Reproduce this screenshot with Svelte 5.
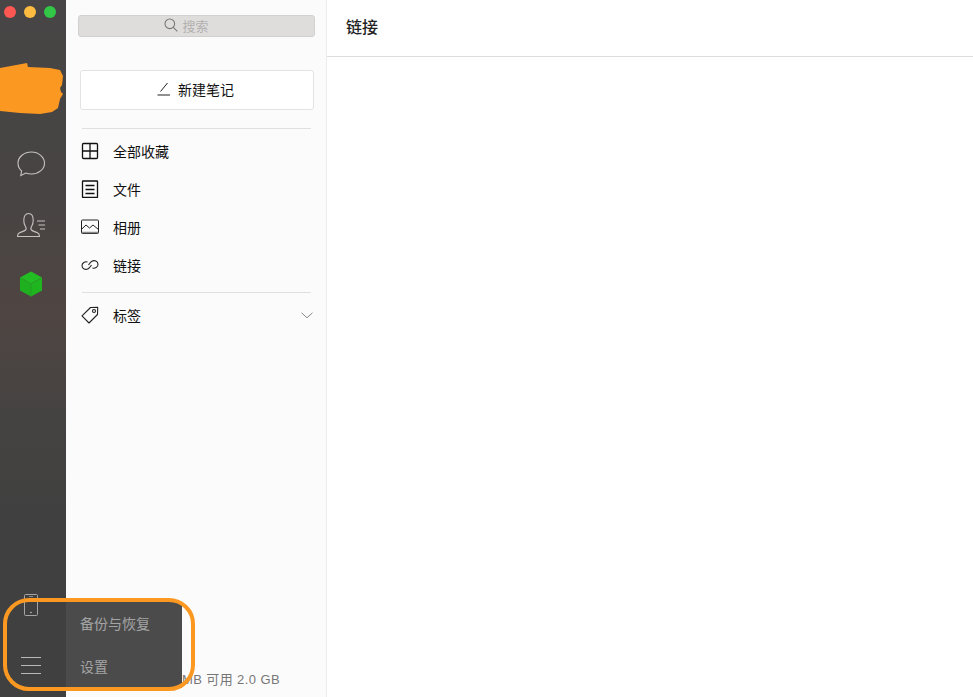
<script lang="ts">
  const navItems = [
    { id: "all", label: "全部收藏" },
    { id: "file", label: "文件" },
    { id: "album", label: "相册" },
    { id: "link", label: "链接" },
  ];
</script>

<div class="window">
  <aside class="rail">
    <div class="lights">
      <span class="light red"></span>
      <span class="light yellow"></span>
      <span class="light green"></span>
    </div>

    <nav class="rail-icons">
      <svg width="30" height="28" viewBox="0 0 30 28" fill="none" stroke="#c4c2c0" stroke-width="1.1">
        <path d="M15.500 1C8 1 2 6 2 12.300c0 3.100 1.300 5.700 3.600 7.700L4.800 24.500l5-2.500c1.800.7 3.700 1 5.700 1 7 0 13-4.800 13-10.800S22.500 1 15.500 1z" />
      </svg>
      <svg width="30" height="26" viewBox="0 0 30 26" fill="none" stroke="#c4c2c0" stroke-width="1.1">
        <path d="M1.500 24.500c0-2 .5-3 2-3.700 2.500-1.100 5-1.800 6-2.800 1-1 .7-2.500-.2-3.800-1-1.500-1.500-3.500-1.500-6 0-4.200 1.800-6.700 4.700-6.700s4.700 2.500 4.700 6.700c0 2.500-.5 4.500-1.500 6-.9 1.300-1.200 2.800-.2 3.800 1 1 3.500 1.700 6 2.800 1.500.7 2 1.700 2 3.700z" />
        <path d="M21 9h8M22.500 13h6.500M24 17h5" />
      </svg>
      <svg width="26" height="26" viewBox="0 0 26 26">
        <path d="M13 .5 24 6.500 13 12.800 2 6.500z" fill="#22bd22" />
        <path d="M2 6.500 13 12.800V25.500L2 19.500z" fill="#1fb01f" />
        <path d="M24 6.500 13 12.800V25.500L24 19.500z" fill="#1fb51f" />
        <path d="M13 12.800V25.500M2 6.500l11 6.300L24 6.500" stroke="#2a9a2a" stroke-width=".8" fill="none" />
      </svg>
    </nav>

    <div class="rail-bottom">
      <svg width="16" height="24" viewBox="0 0 16 24" fill="none" stroke="#a5a5a5" stroke-width="1">
        <rect x="1.500" y="1.500" width="13" height="21" rx="1" />
        <path d="M6 3.500h4" stroke-width=".7" />
        <circle cx="8" cy="19.500" r=".8" fill="#c4c4c4" stroke="none" />
      </svg>
      <svg width="22" height="18" viewBox="0 0 22 18" fill="none" stroke="#b8b8b8" stroke-width="1">
        <path d="M1 .5h20M1 8.500h20M1 16.500h20" />
      </svg>
    </div>
  </aside>

  <section class="sidebar">
    <div class="search">
      <svg width="14" height="14" viewBox="0 0 14 14" fill="none" stroke="#777" stroke-width="1.100">
        <circle cx="5.800" cy="5.800" r="4.800" />
        <path d="m9.300 9.300 4 4" />
      </svg>
      <span>搜索</span>
    </div>

    <button type="button" class="new-note">
      <svg width="14" height="14" viewBox="0 0 14 14" fill="none" stroke="#222" stroke-width="1">
        <path d="M3.500 9.500 10.500 1M.500 13h12.500" />
      </svg>
      <span>新建笔记</span>
    </button>

    <hr class="first" />

    <ul class="nav">
      {#each navItems as item (item.id)}
        <li>
          <span class="nav-icon">
            {#if item.id === "all"}
              <svg width="18" height="18" viewBox="0 0 18 18" fill="none" stroke="#111" stroke-width="1.300">
                <rect x="1.500" y="1.500" width="15" height="15" rx="1" />
                <path d="M9 1.500v15M1.500 9h15" />
              </svg>
            {:else if item.id === "file"}
              <svg width="18" height="18" viewBox="0 0 18 18" fill="none" stroke="#111" stroke-width="1.300">
                <rect x="1.500" y="1" width="15" height="16.500" rx=".5" />
                <path d="M4.500 5.500h9M4.500 9.500h9M4.500 13.500h9" />
              </svg>
            {:else if item.id === "album"}
              <svg width="18" height="16" viewBox="0 0 18 16" fill="none" stroke="#222" stroke-width="1">
                <rect x=".5" y="1" width="17" height="13.500" rx="1" />
                <path d="M.8 10 5 6l3.500 3L12 6l5.500 4.500" />
                <path d="M1 13.500h16" stroke="#888" stroke-width="1.500" />
              </svg>
            {:else}
              <svg width="18" height="12" viewBox="0 0 18 12" fill="none" stroke="#222" stroke-width="1.100">
                <path d="M6.500 3C4 2.300 1 3.700 1 6.800c0 3.200 3.700 4.500 6.200 2.900C8.400 9 9.500 7.500 10.500 6" />
                <path d="M11.500 9c2.500.7 5.500-.7 5.500-3.800 0-3.200-3.700-4.500-6.200-2.900C9.600 3 8.500 4.500 7.500 6" />
              </svg>
            {/if}
          </span>
          <span>{item.label}</span>
        </li>
      {/each}
    </ul>

    <hr class="second" />

    <div class="tags">
      <span class="nav-icon">
        <svg width="18" height="18" viewBox="0 0 18 18" fill="none" stroke="#222" stroke-width="1.100">
          <path d="M1 9.800 9.500 1.500l7.200-.2-.2 7.200L8 17z" stroke-linejoin="round" />
          <circle cx="13" cy="5" r="1.500" />
        </svg>
      </span>
      <span>标签</span>
      <svg class="chevron" width="12" height="7" viewBox="0 0 12 7" fill="none" stroke="#888" stroke-width="1">
        <path d="m.5.8 5.500 5 5.500-5" />
      </svg>
    </div>

    <p class="storage">MB 可用 2.0 GB</p>
  </section>

  <main class="content">
    <header><h1>链接</h1></header>
  </main>

  <!-- popup over the rail and sidebar -->
  <div class="popup">
    <span>备份与恢复</span>
    <span>设置</span>
  </div>

  <!-- annotations drawn on top of the screenshot -->
  <svg class="scribble" width="66" height="54" viewBox="0 0 66 54">
    <path d="M0 5 27 0l1 4 22 1 10 2 3 6-1 9-2 3 1 4 2 2-3 5-2 9-6 4-12 2-20-1-20-2z" fill="#fb9822" />
  </svg>
  <div class="highlight"></div>
</div>

<style>
  :global(body) {
    margin: 0;
    background: #fff;
  }

  .window {
    position: relative;
    display: flex;
    width: 973px;
    height: 697px;
    overflow: hidden;
    font-family: "Liberation Sans", "Noto Sans CJK SC", sans-serif;
    color: #111;
  }

  .rail {
    width: 66px;
    flex: none;
    display: flex;
    flex-direction: column;
    background: linear-gradient(180deg, #474545 0%, #474443 28%, #4f4542 45%, #454342 60%, #404040 75%, #404040 100%);
  }

  .lights {
    display: flex;
    gap: 8px;
    padding: 6px 0 0 4px;
  }

  .light {
    width: 12px;
    height: 12px;
    border-radius: 50%;
  }

  .red { background: #fc5753; }
  .yellow { background: #fdbc40; }
  .green { background: #33c748; }

  .rail-icons {
    margin-top: 133px;
    padding-right: 4px;
    display: flex;
    flex-direction: column;
    align-items: center;
    gap: 33px;
  }

  .rail-bottom {
    margin-top: auto;
    padding: 0 4px 22px 0;
    display: flex;
    flex-direction: column;
    align-items: center;
    gap: 40px;
  }

  .sidebar {
    position: relative;
    width: 261px;
    flex: none;
    box-sizing: border-box;
    padding: 15px 0 0 12px;
    background: #fbfbfb;
    border-right: 1px solid #ececec;
  }

  .search {
    width: 237px;
    height: 22px;
    box-sizing: border-box;
    display: flex;
    align-items: center;
    justify-content: center;
    gap: 4px;
    padding: 0 20px 2px 0;
    background: #dfdddc;
    border: 1px solid #d3d1d0;
    border-radius: 3px;
    font-size: 13px;
    color: #b3b1b0;
  }

  .new-note {
    display: flex;
    align-items: center;
    justify-content: center;
    gap: 7px;
    width: 234px;
    height: 40px;
    margin: 33px 0 0 2px;
    padding: 0 3px 2px 0;
    background: #fff;
    border: 1px solid #e3e3e3;
    border-radius: 3px;
    font: inherit;
    font-size: 14px;
    color: #111;
  }

  hr {
    height: 1px;
    margin: 0 0 0 4px;
    width: 229px;
    border: none;
    background: #e0e0e0;
  }

  hr.first { margin-top: 18px; }
  hr.second { margin-top: 8px; }

  .nav {
    list-style: none;
    margin: 3px 0 0;
    padding: 0;
  }

  .nav li,
  .tags {
    display: flex;
    align-items: center;
    height: 38px;
    padding-left: 3px;
    font-size: 14px;
  }

  .nav-icon {
    display: flex;
    align-items: center;
    justify-content: center;
    width: 18px;
    margin-right: 14px;
  }

  .tags {
    margin-top: 3px;
  }

  .chevron {
    margin-left: auto;
    margin-right: 13px;
  }

  .storage {
    position: absolute;
    right: 46px;
    bottom: 9px;
    margin: 0;
    font-size: 13px;
    color: #777;
    letter-spacing: 0.4px;
  }

  .content {
    flex: 1;
    background: #fff;
  }

  .content header {
    height: 57px;
    box-sizing: border-box;
    display: flex;
    align-items: center;
    padding-left: 19px;
    border-bottom: 1px solid #dcdcdc;
  }

  h1 {
    margin: 0 0 4px;
    font-size: 16px;
    font-weight: 500;
    color: #222;
  }

  .popup {
    position: absolute;
    left: 66px;
    top: 602px;
    width: 116px;
    height: 86px;
    display: flex;
    flex-direction: column;
    padding: 12px 0 0 14px;
    box-sizing: border-box;
    gap: 23px;
    background: #4b4b4b;
    font-size: 14px;
    line-height: 20px;
    color: #a4a4a4;
  }

  .scribble {
    position: absolute;
    left: 0;
    top: 63px;
  }

  .highlight {
    position: absolute;
    left: 3px;
    top: 598px;
    width: 192px;
    height: 93px;
    box-sizing: border-box;
    border: 4px solid #fb9822;
    border-radius: 26px;
  }
</style>
